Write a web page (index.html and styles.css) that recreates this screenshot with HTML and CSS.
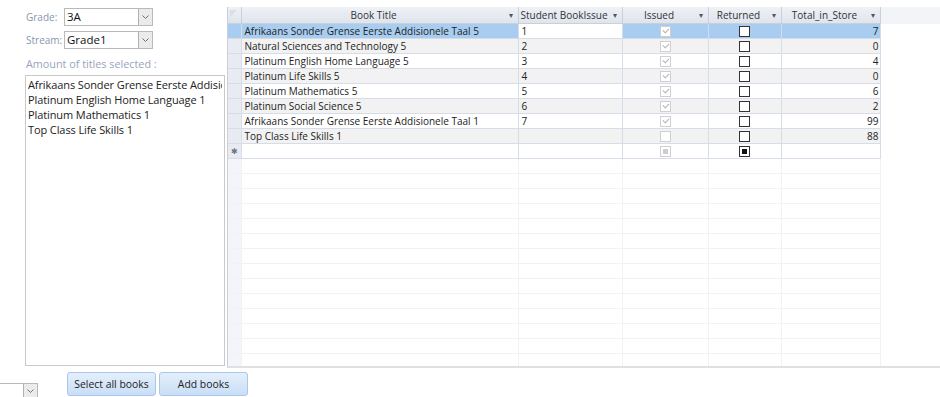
FILE: index.html
```html
<!DOCTYPE html>
<html lang="en">
<head>
    <meta charset="UTF-8">
    <title>Book Issue</title>
    <link rel="stylesheet" href="styles.css">
</head>
<body>

<div class="app">
    <div class="main">
        <div class="side">
            <div class="field">
                <span class="label">Grade:</span>
                <div class="combo"><span class="value">3A</span><span class="drop"></span></div>
            </div>
            <div class="field">
                <span class="label">Stream:</span>
                <div class="combo"><span class="value">Grade1</span><span class="drop"></span></div>
            </div>
            <div class="caption">Amount of titles selected :</div>
            <ul class="listbox">
                <li>Afrikaans Sonder Grense Eerste Addisio</li>
                <li>Platinum English Home Language 1</li>
                <li>Platinum Mathematics 1</li>
                <li>Top Class Life Skills 1</li>
            </ul>
        </div>

        <div class="sheet">
            <table class="grid">
                <colgroup>
                    <col class="c-sel">
                    <col class="c-title">
                    <col class="c-issue">
                    <col class="c-issued">
                    <col class="c-ret">
                    <col class="c-total">
                    <col>
                </colgroup>
                <thead>
                    <tr>
                        <th class="corner"></th>
                        <th><span>Book Title</span><i>▾</i></th>
                        <th><span>Student BookIssue</span><i>▾</i></th>
                        <th><span>Issued</span><i>▾</i></th>
                        <th><span>Returned</span><i>▾</i></th>
                        <th><span>Total_in_Store</span><i>▾</i></th>
                        <th class="filler"></th>
                    </tr>
                </thead>
                <tbody>
                    <tr class="current">
                        <td class="sel"></td>
                        <td class="title">Afrikaans Sonder Grense Eerste Addisionele Taal 5</td>
                        <td class="focus">1</td>
                        <td class="chk"><span class="cb dis on"></span></td>
                        <td class="chk"><span class="cb"></span></td>
                        <td class="num">7</td>
                        <td class="filler"></td>
                    </tr>
                    <tr>
                        <td class="sel"></td>
                        <td class="title">Natural Sciences and Technology 5</td>
                        <td>2</td>
                        <td class="chk"><span class="cb dis on"></span></td>
                        <td class="chk"><span class="cb"></span></td>
                        <td class="num">0</td>
                        <td class="filler"></td>
                    </tr>
                    <tr>
                        <td class="sel"></td>
                        <td class="title">Platinum English Home Language 5</td>
                        <td>3</td>
                        <td class="chk"><span class="cb dis on"></span></td>
                        <td class="chk"><span class="cb"></span></td>
                        <td class="num">4</td>
                        <td class="filler"></td>
                    </tr>
                    <tr>
                        <td class="sel"></td>
                        <td class="title">Platinum Life Skills 5</td>
                        <td>4</td>
                        <td class="chk"><span class="cb dis on"></span></td>
                        <td class="chk"><span class="cb"></span></td>
                        <td class="num">0</td>
                        <td class="filler"></td>
                    </tr>
                    <tr>
                        <td class="sel"></td>
                        <td class="title">Platinum Mathematics 5</td>
                        <td>5</td>
                        <td class="chk"><span class="cb dis on"></span></td>
                        <td class="chk"><span class="cb"></span></td>
                        <td class="num">6</td>
                        <td class="filler"></td>
                    </tr>
                    <tr>
                        <td class="sel"></td>
                        <td class="title">Platinum Social Science 5</td>
                        <td>6</td>
                        <td class="chk"><span class="cb dis on"></span></td>
                        <td class="chk"><span class="cb"></span></td>
                        <td class="num">2</td>
                        <td class="filler"></td>
                    </tr>
                    <tr>
                        <td class="sel"></td>
                        <td class="title">Afrikaans Sonder Grense Eerste Addisionele Taal 1</td>
                        <td>7</td>
                        <td class="chk"><span class="cb dis on"></span></td>
                        <td class="chk"><span class="cb"></span></td>
                        <td class="num">99</td>
                        <td class="filler"></td>
                    </tr>
                    <tr>
                        <td class="sel"></td>
                        <td class="title">Top Class Life Skills 1</td>
                        <td></td>
                        <td class="chk"><span class="cb dis"></span></td>
                        <td class="chk"><span class="cb"></span></td>
                        <td class="num">88</td>
                        <td class="filler"></td>
                    </tr>
                    <tr class="new">
                        <td class="sel">✱</td>
                        <td class="title"></td>
                        <td></td>
                        <td class="chk"><span class="cb dis mixed"></span></td>
                        <td class="chk"><span class="cb mixed"></span></td>
                        <td class="num"></td>
                        <td class="filler"></td>
                    </tr>
                    <tr class="blank"><td class="sel"></td><td></td><td></td><td></td><td></td><td></td><td class="filler"></td></tr>
                    <tr class="blank"><td class="sel"></td><td></td><td></td><td></td><td></td><td></td><td class="filler"></td></tr>
                    <tr class="blank"><td class="sel"></td><td></td><td></td><td></td><td></td><td></td><td class="filler"></td></tr>
                    <tr class="blank"><td class="sel"></td><td></td><td></td><td></td><td></td><td></td><td class="filler"></td></tr>
                    <tr class="blank"><td class="sel"></td><td></td><td></td><td></td><td></td><td></td><td class="filler"></td></tr>
                    <tr class="blank"><td class="sel"></td><td></td><td></td><td></td><td></td><td></td><td class="filler"></td></tr>
                    <tr class="blank"><td class="sel"></td><td></td><td></td><td></td><td></td><td></td><td class="filler"></td></tr>
                    <tr class="blank"><td class="sel"></td><td></td><td></td><td></td><td></td><td></td><td class="filler"></td></tr>
                    <tr class="blank"><td class="sel"></td><td></td><td></td><td></td><td></td><td></td><td class="filler"></td></tr>
                    <tr class="blank"><td class="sel"></td><td></td><td></td><td></td><td></td><td></td><td class="filler"></td></tr>
                    <tr class="blank"><td class="sel"></td><td></td><td></td><td></td><td></td><td></td><td class="filler"></td></tr>
                    <tr class="blank"><td class="sel"></td><td></td><td></td><td></td><td></td><td></td><td class="filler"></td></tr>
                    <tr class="blank"><td class="sel"></td><td></td><td></td><td></td><td></td><td></td><td class="filler"></td></tr>
                    <tr class="blank"><td class="sel"></td><td></td><td></td><td></td><td></td><td></td><td class="filler"></td></tr>
                    <tr class="blank"><td class="sel"></td><td></td><td></td><td></td><td></td><td></td><td class="filler"></td></tr>
                </tbody>
            </table>
        </div>
    </div>

    <div class="footer">
        <div class="combo small"><span class="value"></span><span class="drop"></span></div>
        <button type="button" class="btn">Select all books</button>
        <button type="button" class="btn">Add books</button>
    </div>
</div>

</body>
</html>
```

FILE: styles.css
```css
body {
    margin: 0;
    font-family: "Open Sans", "Noto Sans", sans-serif;
    font-size: 10px;
    color: #222;
    background: #fff;
}
.app {
    width: 940px;
    height: 397px;
    overflow: hidden;
}
.main {
    display: flex;
    height: 368px;
}

/* left panel */
.side {
    width: 200px;
    padding: 8px 0 0 25px;
    display: flex;
    flex-direction: column;
}
.field {
    display: flex;
    align-items: center;
    height: 18px;
    margin-bottom: 5px;
}
.label {
    width: 38px;
    padding-left: 1px;
    color: #8696b0;
    font-size: 10px;
    white-space: nowrap;
}
.combo {
    display: flex;
    width: 89px;
    height: 18px;
    box-sizing: border-box;
    border: 1px solid #b9b9b9;
    background: #fff;
}
.combo .value {
    flex: 1;
    padding-left: 2px;
    font-size: 11.5px;
    line-height: 16px;
    color: #111;
}
.combo .drop {
    width: 13px;
    border-left: 1px solid #b0b0b0;
    background: #ebebeb url("data:image/svg+xml,%3Csvg xmlns='http://www.w3.org/2000/svg' width='7' height='4'%3E%3Cpath d='M0.5 0.5 L3.5 3.5 L6.5 0.5' fill='none' stroke='%23707070'/%3E%3C/svg%3E") no-repeat center;
}
.caption {
    margin: 3px 0 4px 1px;
    color: #97a5bc;
    font-size: 10.8px;
    line-height: 14px;
}
.listbox {
    list-style: none;
    margin: 0;
    padding: 1px 2px;
    height: 287px;
    border: 1px solid #c9c9c9;
    overflow: hidden;
    font-size: 11px;
    letter-spacing: -0.1px;
    line-height: 15px;
}
.listbox li {
    white-space: nowrap;
    overflow: hidden;
    text-overflow: clip;
}

/* datasheet */
.sheet {
    margin: 7px 0 0 2px;
    flex: 1;
    height: 359px;
    overflow: hidden;
    border-left: 1px solid #c9ced8;
    border-bottom: 2px solid #e0e0e0;
}
.grid {
    border-collapse: collapse;
    table-layout: fixed;
    width: 713px;
}
.c-sel { width: 13px; }
.c-title { width: 277px; }
.c-issue { width: 104px; }
.c-issued { width: 86px; }
.c-ret { width: 73px; }
.c-total { width: 99px; }
.grid th {
    height: 16px;
    padding: 0 12px 0 0;
    font-weight: normal;
    color: #333;
    background: linear-gradient(#eef1f6, #dfe4ec);
    border: 1px solid #c8d0dc;
    border-top: none;
    position: relative;
    text-align: center;
    line-height: 15px;
    white-space: nowrap;
}
.grid th i {
    position: absolute;
    right: 5px;
    top: 0;
    font-style: normal;
    font-size: 8px;
    color: #555;
}
.grid th.corner {
    border-left: none;
    padding: 0;
}
.grid th.corner::before {
    content: "";
    position: absolute;
    left: 2px;
    top: 3px;
    border-top: 7px solid #d9dee7;
    border-right: 7px solid transparent;
}
.grid th.filler {
    background: #f2f4f8;
    border: none;
}
.grid td {
    height: 14px;
    padding: 0 0 0 3px;
    border: 1px solid #d6dce8;
    white-space: nowrap;
    overflow: hidden;
    line-height: 14px;
}
.grid tbody tr:nth-child(even) td {
    background: #f2f2f2;
}
.grid td.sel {
    padding: 0;
    background: #e8ebf1;
    border-left: none;
    text-align: center;
    font-size: 8px;
    color: #6d7785;
}
.grid tbody tr:nth-child(even) td.sel {
    background: #e8ebf1;
}
.grid td.num {
    text-align: right;
    padding: 0 1px 0 0;
}
.grid td.chk {
    padding: 0;
    text-align: center;
}
.grid td.filler,
.grid tbody tr:nth-child(even) td.filler {
    border: none;
    border-left: 1px solid #d6dce8;
    background: #fff;
}
.grid tr.current td {
    background: #a8cdf0;
}
.grid tr.current td.focus {
    background: #fff;
}
.grid tr.current td.filler {
    background: #fff;
}
.grid tr.new td,
.grid tbody tr.new:nth-child(even) td {
    background: #fff;
}
.grid tr.new td.sel {
    background: #e8ebf1;
}
.grid tr.blank td,
.grid tbody tr.blank:nth-child(even) td {
    background: #fff;
    border-color: #f1f2f5;
}
.grid tr.blank td.sel,
.grid tbody tr.blank:nth-child(even) td.sel {
    background: #f3f5fa;
}
.grid tr.blank td.filler {
    border: none;
}

/* check boxes */
.cb {
    display: inline-block;
    width: 11px;
    height: 11px;
    box-sizing: border-box;
    border: 1px solid #333;
    background: #fff;
    vertical-align: middle;
    position: relative;
    top: -1px;
}
.cb.dis {
    border-color: #cfcfcf;
}
.cb.on::after {
    content: "";
    position: absolute;
    left: 2px;
    top: 1px;
    width: 5px;
    height: 3px;
    border-left: 1px solid #b5b5b5;
    border-bottom: 1px solid #b5b5b5;
    transform: rotate(-45deg);
}
.cb.mixed::after {
    content: "";
    position: absolute;
    left: 2px;
    top: 2px;
    width: 5px;
    height: 5px;
    background: #111;
}
.cb.dis.mixed::after {
    background: #cdcdcd;
}

/* bottom buttons */
.footer {
    display: flex;
    align-items: flex-start;
    height: 29px;
    padding-top: 4px;
    box-sizing: border-box;
}
.combo.small {
    width: 39px;
    margin: 11px 29px 0 -1px;
    height: 16px;
}
.btn {
    width: 89px;
    height: 24px;
    margin-right: 3px;
    padding: 0;
    font-family: inherit;
    font-size: 10.4px;
    color: #222;
    background: linear-gradient(#e4effb, #c9def6);
    border: 1px solid #a7c8ec;
    border-radius: 3px;
}
```
